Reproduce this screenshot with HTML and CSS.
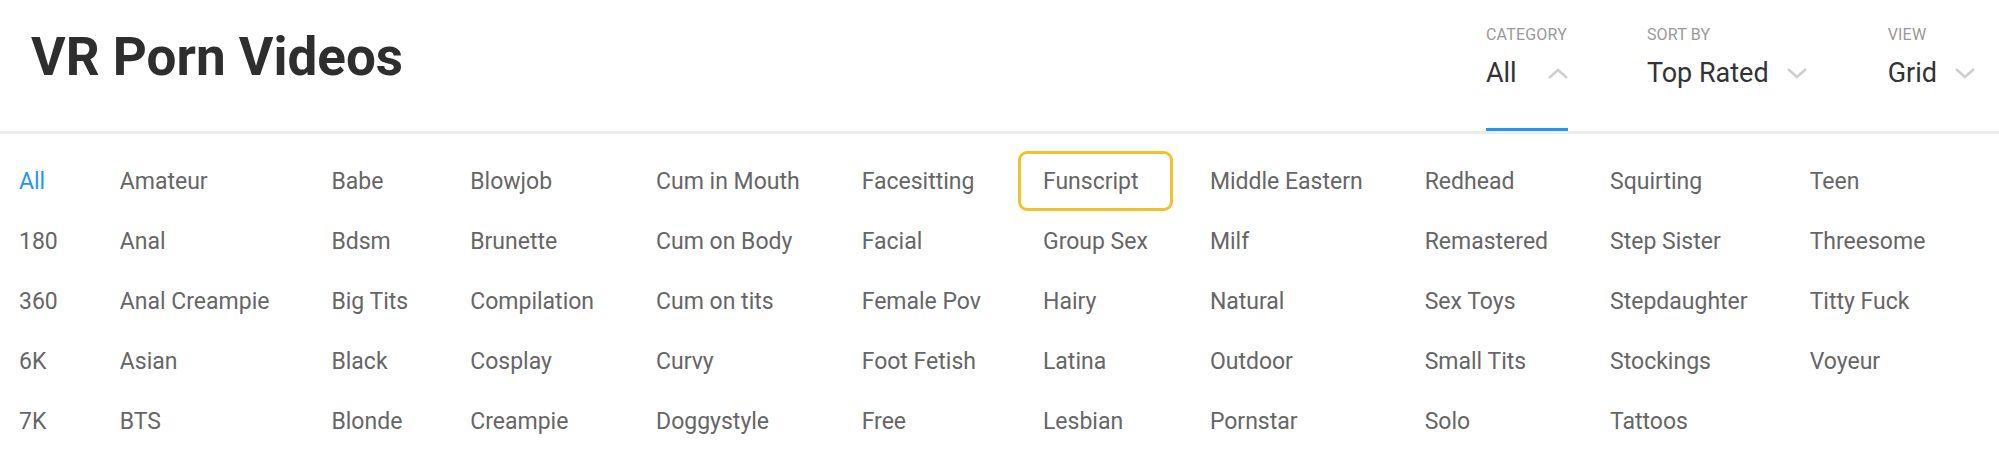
FILE: index.html
```html
<!DOCTYPE html>
<html lang="en">
<head>
<meta charset="UTF-8">
<meta name="viewport" content="width=device-width, initial-scale=1.0">
<title>VR Porn Videos</title>
<link rel="stylesheet" href="styles.css">
</head>
<body>
<!-- Page header with filters -->
<div class="page-header">
  <h1 class="page-title">VR Porn Videos</h1>

  <div class="filters">
    <div class="filter filter-category active">
      <div class="filter-label">CATEGORY</div>
      <div class="filter-value">
        <span>All</span>
        <svg class="chevron" viewBox="0 0 20 11"><polyline points="1,10 10,2 19,10"/></svg>
      </div>
    </div>
    <div class="filter filter-sort">
      <div class="filter-label">SORT BY</div>
      <div class="filter-value">
        <span>Top Rated</span>
        <svg class="chevron" viewBox="0 0 20 11"><polyline points="1,1 10,9 19,1"/></svg>
      </div>
    </div>
    <div class="filter filter-view">
      <div class="filter-label">VIEW</div>
      <div class="filter-value">
        <span>Grid</span>
        <svg class="chevron" viewBox="0 0 20 11"><polyline points="1,1 10,9 19,1"/></svg>
      </div>
    </div>
  </div>
</div>

<!-- Category list -->
<ul class="category-list">
  <li class="category-item selected">All</li>
  <li class="category-item">180</li>
  <li class="category-item">360</li>
  <li class="category-item">6K</li>
  <li class="category-item">7K</li>

  <li class="category-item">Amateur</li>
  <li class="category-item">Anal</li>
  <li class="category-item">Anal Creampie</li>
  <li class="category-item">Asian</li>
  <li class="category-item">BTS</li>

  <li class="category-item">Babe</li>
  <li class="category-item">Bdsm</li>
  <li class="category-item">Big Tits</li>
  <li class="category-item">Black</li>
  <li class="category-item">Blonde</li>

  <li class="category-item">Blowjob</li>
  <li class="category-item">Brunette</li>
  <li class="category-item">Compilation</li>
  <li class="category-item">Cosplay</li>
  <li class="category-item">Creampie</li>

  <li class="category-item">Cum in Mouth</li>
  <li class="category-item">Cum on Body</li>
  <li class="category-item">Cum on tits</li>
  <li class="category-item">Curvy</li>
  <li class="category-item">Doggystyle</li>

  <li class="category-item">Facesitting</li>
  <li class="category-item">Facial</li>
  <li class="category-item">Female Pov</li>
  <li class="category-item">Foot Fetish</li>
  <li class="category-item">Free</li>

  <li class="category-item focused">Funscript</li>
  <li class="category-item">Group Sex</li>
  <li class="category-item">Hairy</li>
  <li class="category-item">Latina</li>
  <li class="category-item">Lesbian</li>

  <li class="category-item">Middle Eastern</li>
  <li class="category-item">Milf</li>
  <li class="category-item">Natural</li>
  <li class="category-item">Outdoor</li>
  <li class="category-item">Pornstar</li>

  <li class="category-item">Redhead</li>
  <li class="category-item">Remastered</li>
  <li class="category-item">Sex Toys</li>
  <li class="category-item">Small Tits</li>
  <li class="category-item">Solo</li>

  <li class="category-item">Squirting</li>
  <li class="category-item">Step Sister</li>
  <li class="category-item">Stepdaughter</li>
  <li class="category-item">Stockings</li>
  <li class="category-item">Tattoos</li>

  <li class="category-item">Teen</li>
  <li class="category-item">Threesome</li>
  <li class="category-item">Titty Fuck</li>
  <li class="category-item">Voyeur</li>
</ul>
</body>
</html>
```

FILE: styles.css
```css
body {
  margin: 0;
  font-family: Roboto, "Liberation Sans", Arial, sans-serif;
  background-color: #fff;
  color: #666;
}
.page-header {
  display: flex;
  justify-content: space-between;
  height: 134px;
  box-sizing: border-box;
  padding: 0 24px 0 31px;
  border-bottom: 3px solid #ececec;
}
.page-title {
  margin: 0;
  padding-top: 31px;
  font-size: 53px;
  line-height: 1;
  font-weight: 700;
  color: #2e2e2e;
}
.filters {
  display: flex;
  gap: 81px;
}
.filter {
  box-sizing: border-box;
  height: 131px;
  padding-top: 27px;
  border-bottom: 3px solid transparent;
}
.filter.active {
  border-bottom-color: #2196f3;
}
.filter-category {
  margin-right: -2px;
}
.filter-label {
  font-size: 16px;
  line-height: 1;
  letter-spacing: 0.2px;
  color: #999;
}
.filter-value {
  display: flex;
  align-items: center;
  gap: 18px;
  margin-top: 17px;
  font-size: 27px;
  line-height: 1;
  color: #333;
}
.filter-category .filter-value {
  justify-content: space-between;
  width: 82px;
}
.chevron {
  width: 20px;
  height: 11px;
  fill: none;
  stroke: #cfcfcf;
  stroke-width: 2.5;
}
.category-list {
  list-style-type: none;
  margin: 17px 0 0 -6px;
  padding: 0;
  display: grid;
  grid-template-rows: repeat(5, 60px);
  grid-auto-flow: column;
  grid-auto-columns: max-content;
  column-gap: 12px;
}
.category-item {
  display: flex;
  align-items: center;
  box-sizing: border-box;
  padding: 0 22px;
  border: 3px solid transparent;
  border-radius: 9px;
  font-size: 23px;
  color: #666;
}
.category-item.selected {
  color: #2196f3;
}
.category-item.focused {
  border-color: #f2c12e;
}
```
